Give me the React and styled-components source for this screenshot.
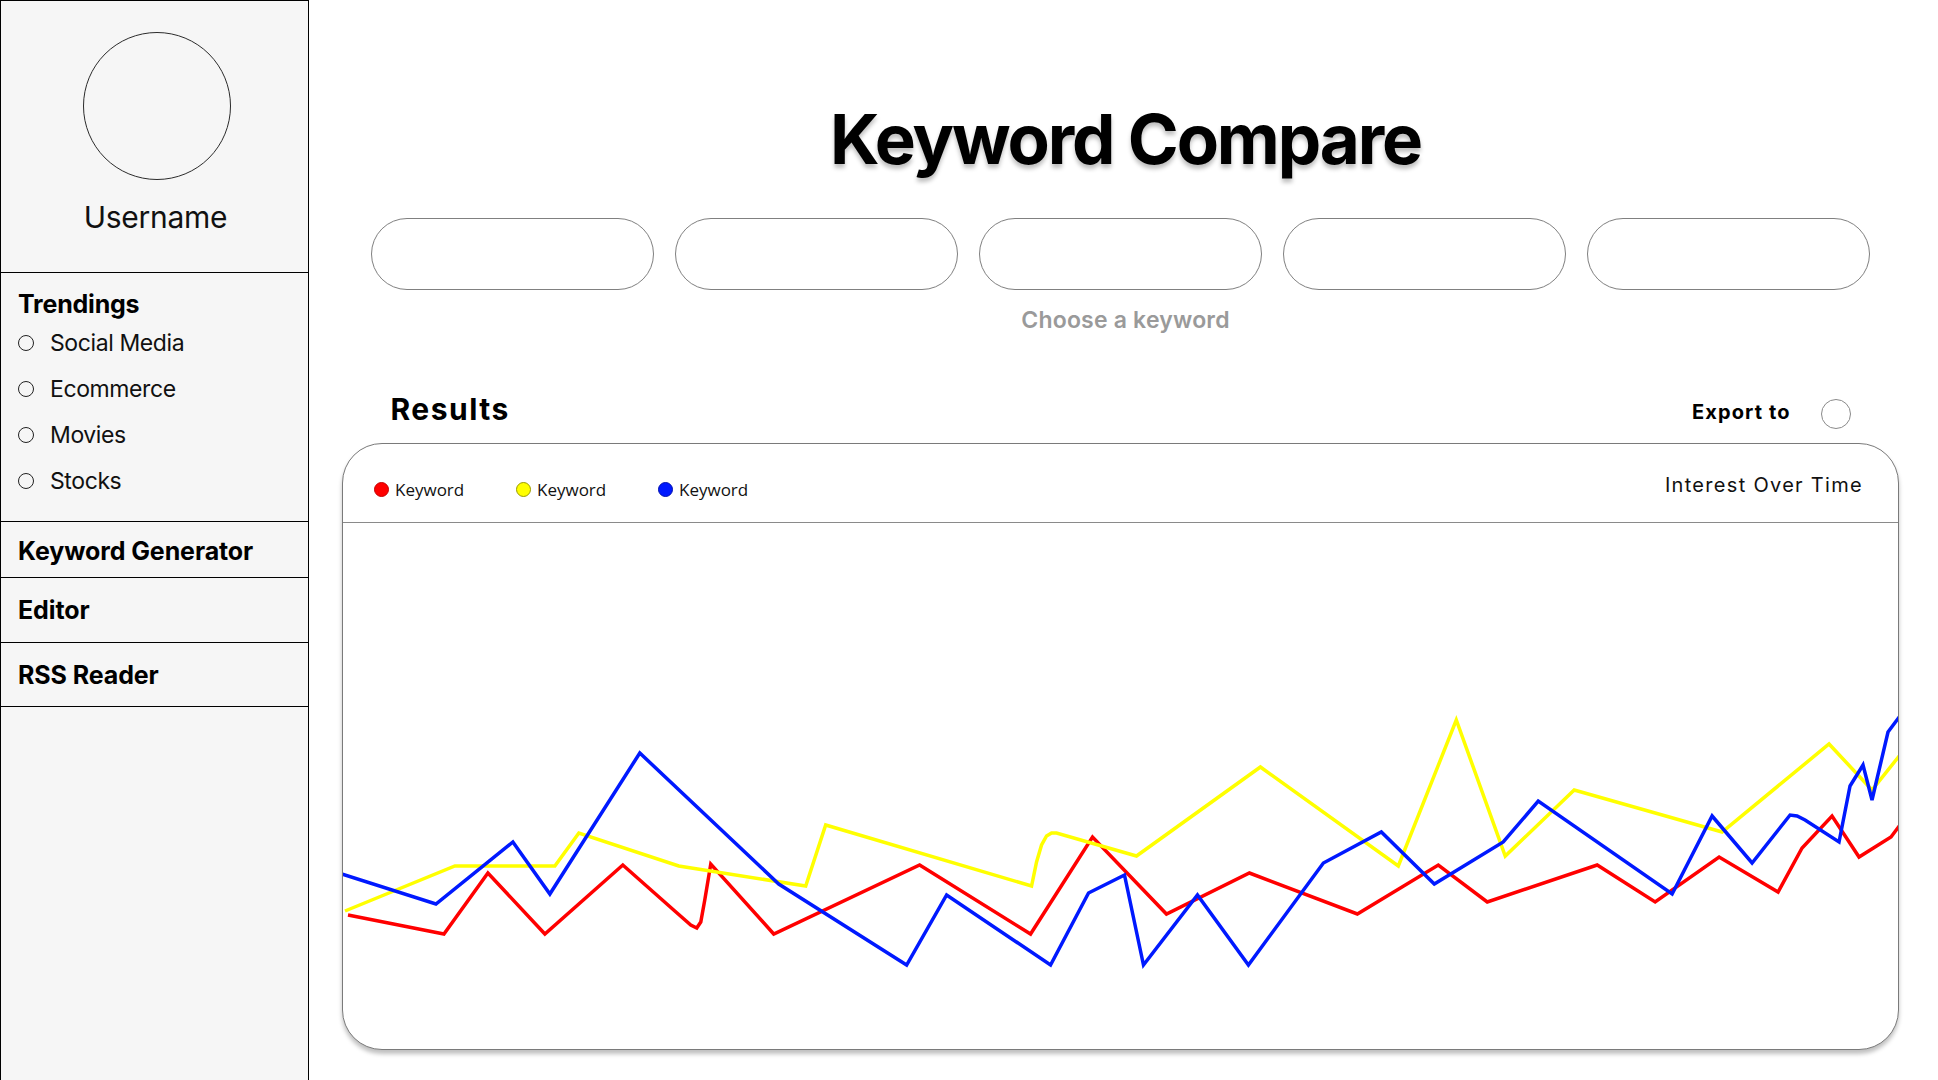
import React from "react";
import styled, { createGlobalStyle } from "styled-components";

const GlobalStyle = createGlobalStyle`
  html, body {
    margin: 0;
    padding: 0;
    background: #ffffff;
  }
  body {
    font-family: Inter, "Noto Sans", "Liberation Sans", sans-serif;
    color: #000000;
  }
  * { box-sizing: border-box; }
`;

/* ===== page ===== */

const Page = styled.div`
  display: flex;
  width: 100%;
  min-height: 1080px;
`;

/* ===== sidebar ===== */

const Sidebar = styled.aside`
  width: 309px;
  flex-shrink: 0;
  min-height: 1080px;
  background: #f6f6f6;
  border: 1px solid #000000;
  border-bottom: none;
  display: flex;
  flex-direction: column;
`;

const Profile = styled.div`
  height: 272px;
  border-bottom: 1px solid #000000;
  display: flex;
  flex-direction: column;
  align-items: center;
  padding-top: 31px;
`;

const Avatar = styled.div`
  width: 148px;
  height: 148px;
  border-radius: 50%;
  border: 1px solid #2b2b2b;
  margin-left: 4px;
`;

const Username = styled.div`
  margin-top: 19px;
  margin-left: 2px;
  font-size: 30px;
  line-height: 1.25;
  font-weight: 400;
  letter-spacing: -0.3px;
  color: #111111;
`;

const Trendings = styled.div`
  border-bottom: 1px solid #000000;
  padding: 16px 17px 17px;
`;

const SectionTitle = styled.div`
  font-size: 25px;
  line-height: 30px;
  font-weight: 700;
  letter-spacing: -0.2px;
`;

const TrendList = styled.ul`
  list-style: none;
  margin: 1px 0 0;
  padding: 0;
`;

const TrendItem = styled.li`
  height: 46px;
  display: flex;
  align-items: center;
  gap: 16px;
  font-size: 23px;
  font-weight: 400;
  letter-spacing: -0.4px;
  color: #111111;

  &::before {
    content: "";
    width: 14px;
    height: 14px;
    border-radius: 50%;
    border: 1px solid #222222;
    background: #f6f6f6;
    flex-shrink: 0;
  }
`;

const NavItem = styled.div`
  padding: ${(p) => p.$top}px 17px ${(p) => p.$bottom}px;
  border-bottom: 1px solid #000000;
  font-size: 25px;
  line-height: 30px;
  font-weight: 700;
  letter-spacing: -0.1px;
`;

/* ===== main ===== */

const Main = styled.main`
  flex: 1;
  display: flex;
  flex-direction: column;
  align-items: center;
  padding-right: 6px;
`;

const Title = styled.h1`
  margin: 104px 0 0;
  padding-left: 10px;
  font-size: 69px;
  line-height: 70px;
  font-weight: 700;
  letter-spacing: -2.1px;
  text-shadow: 0 4px 4px rgba(0, 0, 0, 0.25);
`;

const KeywordRow = styled.div`
  margin-top: 44px;
  display: flex;
  gap: 21px;
`;

const KeywordInput = styled.input`
  width: 283px;
  height: 72px;
  border-radius: 36px;
  border: 1px solid #808080;
  background: #ffffff;
  outline: none;
  padding: 0 28px;
  font-family: inherit;
  font-size: 20px;
`;

const Hint = styled.div`
  margin-top: 16px;
  padding-left: 10px;
  font-size: 23px;
  line-height: 28px;
  font-weight: 600;
  color: #9a9a9a;
  letter-spacing: 0.2px;
`;

const ResultsRow = styled.div`
  margin-top: 57px;
  width: 1460px;
  display: flex;
  align-items: flex-start;
  justify-content: space-between;
`;

const ResultsTitle = styled.h2`
  margin: 0;
  font-size: 30px;
  line-height: 36px;
  font-weight: 700;
  letter-spacing: 1.5px;
`;

const ExportGroup = styled.div`
  margin-top: 8px;
  display: flex;
  align-items: center;
  gap: 30px;
`;

const ExportLabel = styled.span`
  font-size: 20px;
  line-height: 24px;
  font-weight: 700;
  letter-spacing: 1.1px;
  margin-bottom: 4px;
`;

const ExportButton = styled.button`
  width: 30px;
  height: 30px;
  padding: 0;
  border-radius: 50%;
  border: 1px solid #8a8a8a;
  background: #ffffff;
  cursor: pointer;
`;

/* ===== chart card ===== */

const ChartCard = styled.section`
  margin-top: 14px;
  width: 1557px;
  height: 607px;
  border: 1px solid #7a7a7a;
  border-radius: 40px;
  background: #ffffff;
  box-shadow: 0 4px 4px rgba(0, 0, 0, 0.25);
  overflow: hidden;
  display: flex;
  flex-direction: column;
`;

const ChartHeader = styled.div`
  height: 79px;
  flex-shrink: 0;
  border-bottom: 1px solid #8a8a8a;
  display: flex;
  align-items: center;
  justify-content: space-between;
  padding: 0 35px 0 31px;
`;

const Legend = styled.div`
  margin-top: 12px;
  display: flex;
`;

const LegendItem = styled.div`
  width: 142px;
  display: flex;
  align-items: center;
  gap: 6px;
  font-family: "Open Sans", "Noto Sans", sans-serif;
  font-size: 17px;
  line-height: 23px;
  color: #111111;
`;

const LegendDot = styled.span`
  width: 15px;
  height: 15px;
  border-radius: 50%;
  background: ${(p) => p.$color};
  border: 1px solid ${(p) => p.$edge};
  flex-shrink: 0;
`;

const ChartTitle = styled.div`
  margin-top: 4px;
  font-size: 20px;
  line-height: 24px;
  font-weight: 400;
  letter-spacing: 1.3px;
  color: #111111;
`;

const ChartBody = styled.div`
  flex: 1;
  position: relative;

  svg {
    display: block;
    width: 100%;
    height: 100%;
  }
`;

/* ===== data (page coords, mapped by viewBox) ===== */

const redLine = [
  [349, 915], [445, 934], [489, 873], [546, 934], [624, 865], [676, 911],
  [692, 925], [698, 928], [702, 922], [706, 900], [712, 864], [775, 934],
  [921, 865], [1032, 934], [1094, 837], [1168, 914], [1251, 873],
  [1359, 914], [1440, 865], [1489, 902], [1599, 865], [1657, 902],
  [1721, 857], [1780, 892], [1804, 848], [1834, 816], [1861, 857],
  [1893, 837], [1902, 825],
];

const yellowLine = [
  [346, 911], [456, 866], [556, 866], [580, 833], [680, 866], [807, 886],
  [827, 825], [1033, 886], [1038, 862], [1043, 845], [1048, 836],
  [1053, 833], [1058, 833], [1138, 856], [1262, 767], [1400, 866],
  [1458, 720], [1507, 856], [1576, 790], [1724, 832], [1831, 744],
  [1874, 790], [1902, 755],
];

const blueLine = [
  [343, 874], [437, 904], [514, 842], [551, 894], [641, 753], [780, 884],
  [908, 965], [948, 895], [1052, 965], [1090, 893], [1126, 875],
  [1145, 965], [1199, 895], [1250, 965], [1325, 863], [1383, 832],
  [1436, 884], [1505, 842], [1540, 801], [1674, 894], [1714, 816],
  [1754, 863], [1792, 815], [1799, 816], [1807, 820], [1841, 842],
  [1852, 786], [1865, 765], [1874, 800], [1890, 732], [1902, 716],
];

const toPoints = (pts) => pts.map(([x, y]) => `${x},${y}`).join(" ");

const series = [
  { color: "#ff0000", edge: "#c40000", points: redLine },
  { color: "#ffff00", edge: "#9a9a00", points: yellowLine },
  { color: "#0019ff", edge: "#0010b0", points: blueLine },
];

const trendings = ["Social Media", "Ecommerce", "Movies", "Stocks"];

export default function App() {
  return (
    <>
      <GlobalStyle />
      <Page>
        <Sidebar>
          <Profile>
            <Avatar />
            <Username>Username</Username>
          </Profile>

          <Trendings>
            <SectionTitle>Trendings</SectionTitle>
            <TrendList>
              {trendings.map((t) => (
                <TrendItem key={t}>{t}</TrendItem>
              ))}
            </TrendList>
          </Trendings>

          <NavItem $top={14} $bottom={11}>Keyword Generator</NavItem>
          <NavItem $top={17} $bottom={17}>Editor</NavItem>
          <NavItem $top={17} $bottom={16}>RSS Reader</NavItem>
        </Sidebar>

        <Main>
          <Title>Keyword Compare</Title>

          <KeywordRow>
            {[0, 1, 2, 3, 4].map((i) => (
              <KeywordInput key={i} type="text" aria-label={`keyword ${i + 1}`} />
            ))}
          </KeywordRow>
          <Hint>Choose a keyword</Hint>

          <ResultsRow>
            <ResultsTitle>Results</ResultsTitle>
            <ExportGroup>
              <ExportLabel>Export to</ExportLabel>
              <ExportButton type="button" aria-label="export" />
            </ExportGroup>
          </ResultsRow>

          <ChartCard>
            <ChartHeader>
              <Legend>
                {series.map((s) => (
                  <LegendItem key={s.color}>
                    <LegendDot $color={s.color} $edge={s.edge} />
                    Keyword
                  </LegendItem>
                ))}
              </Legend>
              <ChartTitle>Interest Over Time</ChartTitle>
            </ChartHeader>

            <ChartBody>
              <svg viewBox="344 523 1556 526" preserveAspectRatio="none">
                {series.map((s) => (
                  <polyline
                    key={s.color}
                    points={toPoints(s.points)}
                    fill="none"
                    stroke={s.color}
                    strokeWidth="3.5"
                    strokeLinejoin="miter"
                    vectorEffect="non-scaling-stroke"
                  />
                ))}
              </svg>
            </ChartBody>
          </ChartCard>
        </Main>
      </Page>
    </>
  );
}
